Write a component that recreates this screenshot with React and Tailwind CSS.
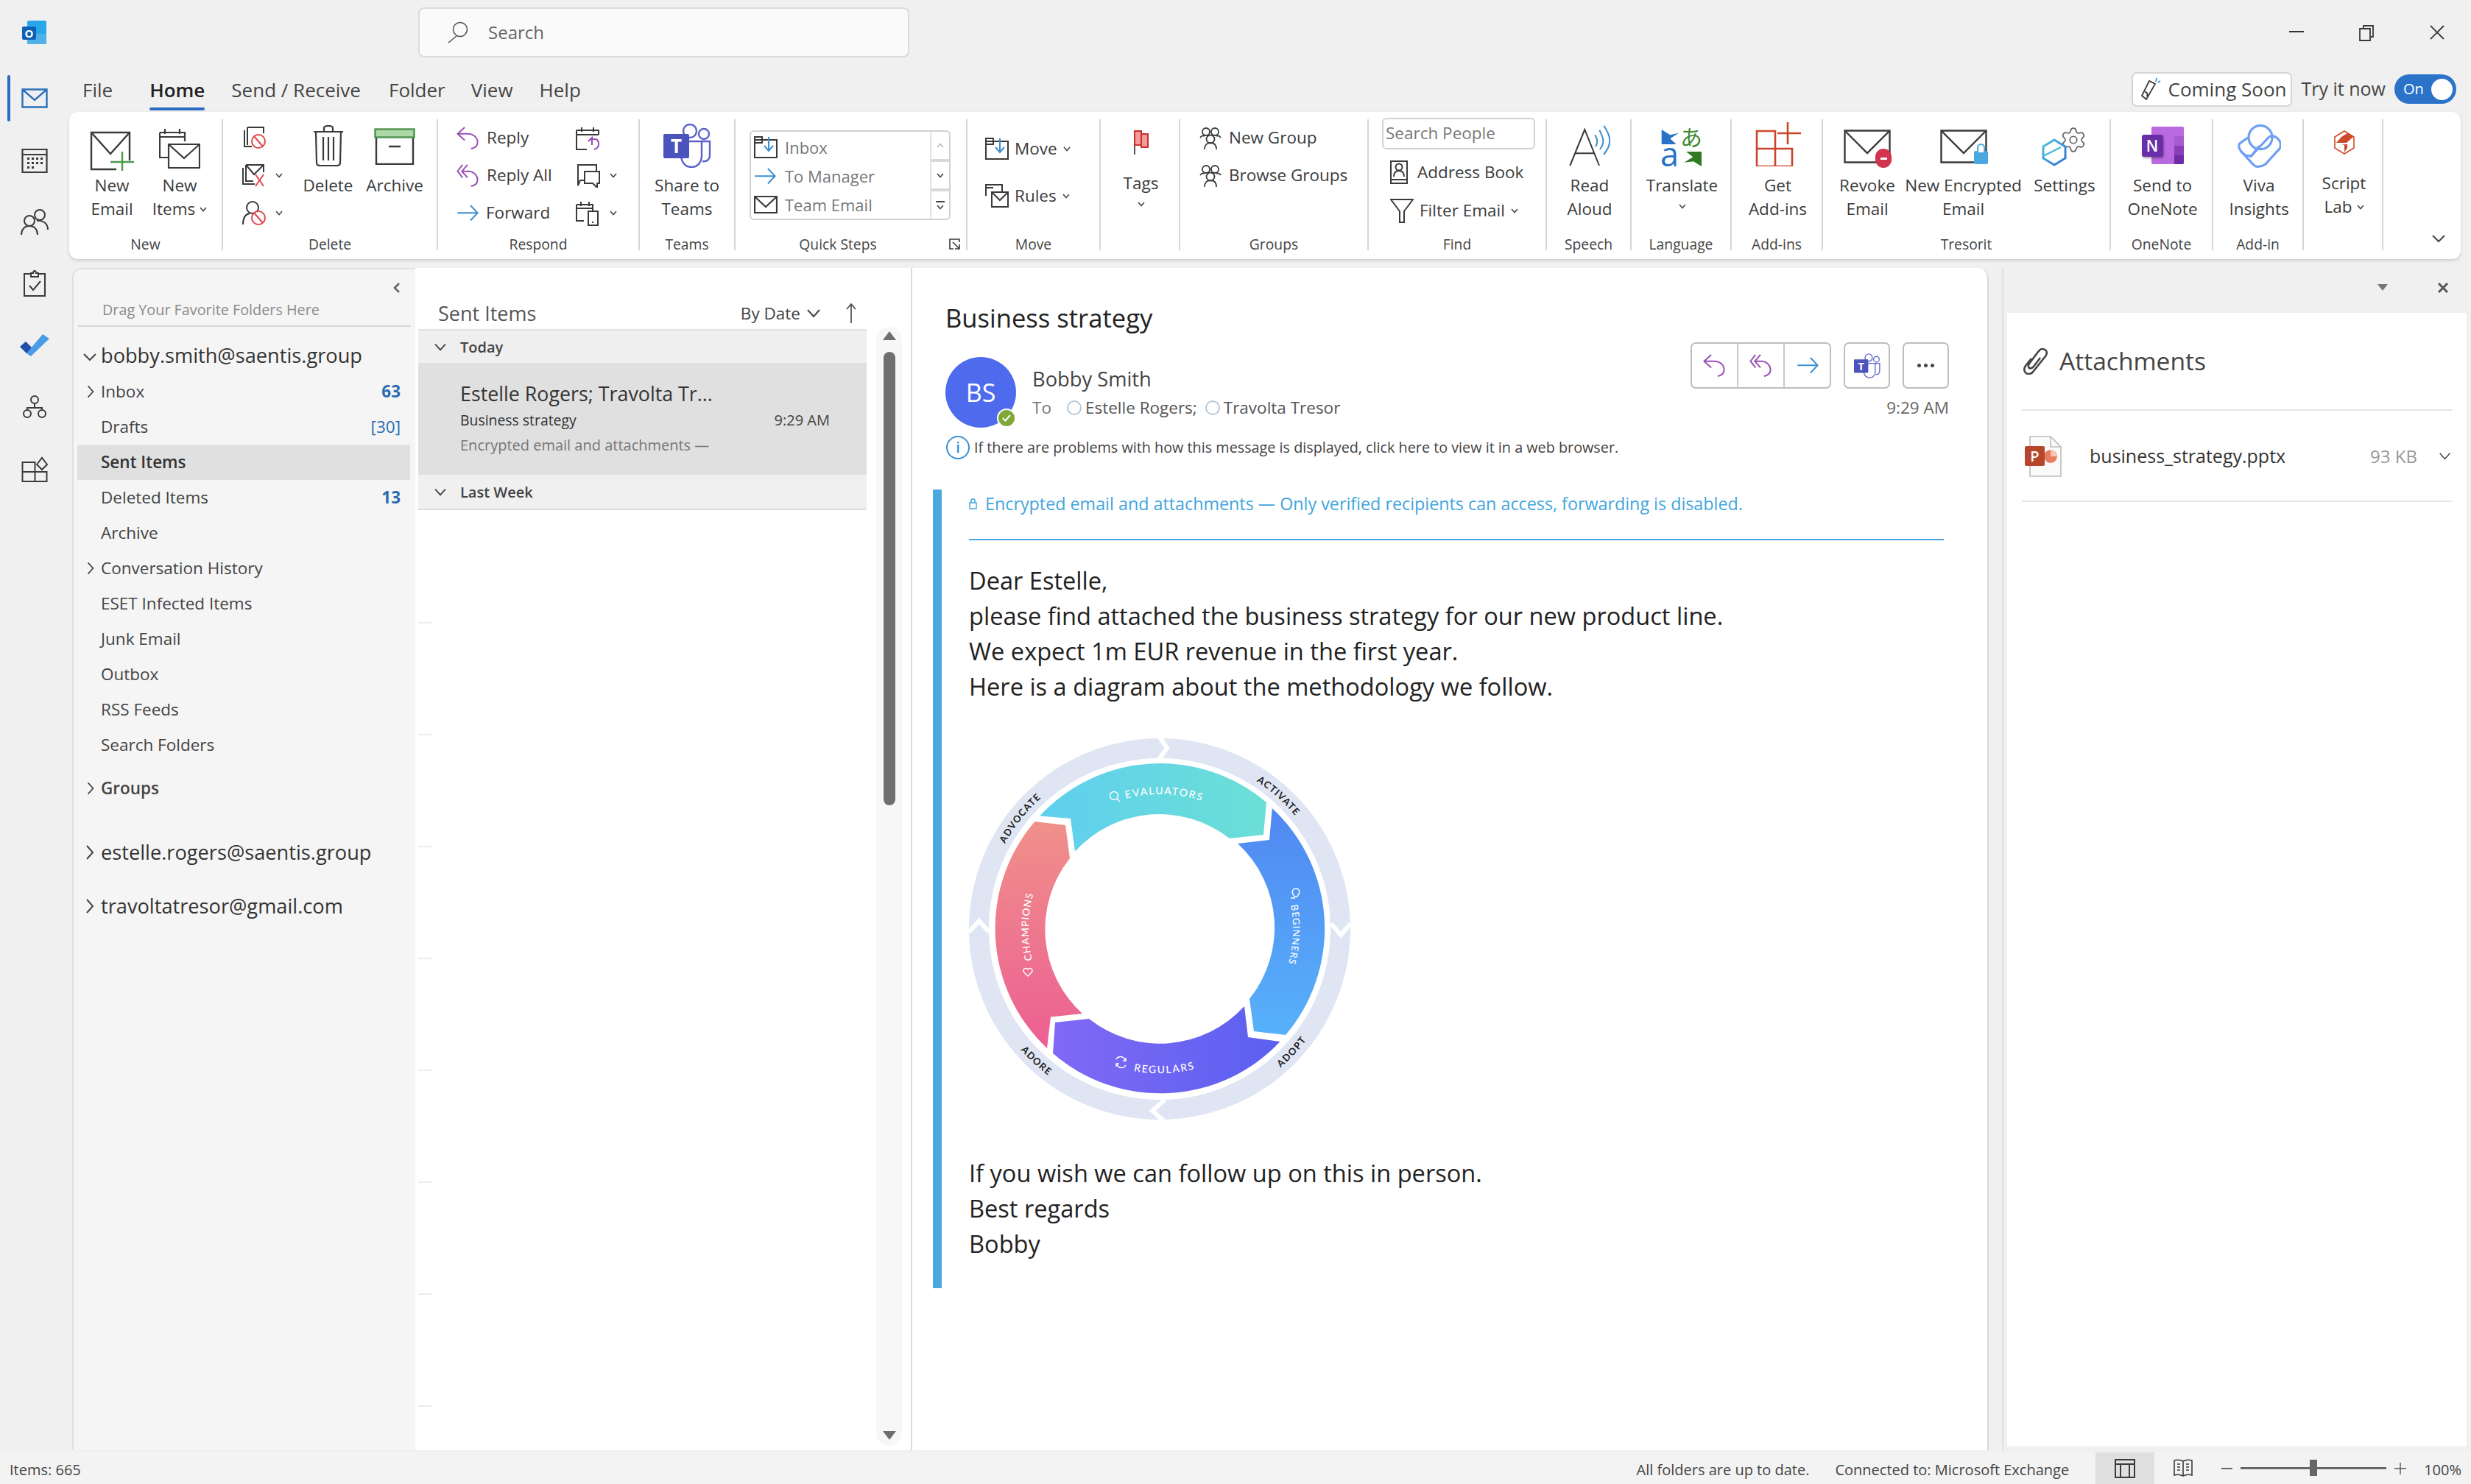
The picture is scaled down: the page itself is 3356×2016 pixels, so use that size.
import React from "react";
import { Settings as Gear } from "lucide-react";

const INK = "#3a3a3a";

const Svg = ({ w, h, vw, vh, className = "", children, stroke = INK, sw = 2 }) => (
  <svg
    width={w}
    height={h}
    viewBox={`0 0 ${vw || w} ${vh || h}`}
    fill="none"
    stroke={stroke}
    strokeWidth={sw}
    className={"shrink-0 " + className}
  >
    {children}
  </svg>
);

const Chev = ({ className = "", w = 10, h = 7, stroke = "#444", sw = 1.6 }) => (
  <Svg w={w} h={h} vw={10} vh={7} stroke={stroke} sw={sw} className={className}>
    <path d="M1 1l4 4.5L9 1" />
  </Svg>
);

const Down = ({ className = "", s = 20 }) => (
  <Svg w={s} h={s} vw={20} vh={20} stroke="#444" sw={2} className={className}>
    <path d="M2 6l8 8 8-8" />
  </Svg>
);

const Right = ({ className = "" }) => (
  <Svg w={12} h={22} stroke="#444" sw={2} className={className}>
    <path d="M2 2l8 9-8 9" />
  </Svg>
);

/* ---- ribbon + reading pane action icons ---- */
const ReplyIco = ({ s = 31, className = "" }) => (
  <Svg w={s} h={s} vw={31} vh={32} stroke="#9a4fb3" className={className}>
    <path d="M11 1L1 10l10 9M1 10h14c9 0 14 6 14 12 0 5-4 8-9 9" />
  </Svg>
);
const ReplyAllIco = ({ s = 31, className = "" }) => (
  <Svg w={s} h={s} vw={31} vh={32} stroke="#9a4fb3" className={className}>
    <path d="M8 1L1 10l7 9M15 1l-8 9 8 9M7 10h9c8 0 13 6 13 12 0 5-4 8-9 9" />
  </Svg>
);
const ForwardIco = ({ s = 30, className = "" }) => (
  <Svg w={s} h={s * 0.75} vw={30} vh={23} stroke="#3b8fd1" className={className}>
    <path d="M1 11.5h27M19 1l10 10.5L19 22" />
  </Svg>
);

const TeamsIco = ({ w = 65, h = 60, className = "" }) => (
  <Svg w={w} h={h} vw={65} vh={60} stroke="#5b64c9" sw={2.4} className={className}>
    <circle cx="36" cy="10" r="9" />
    <circle cx="55" cy="14" r="7" />
    <path d="M34 24h29v18c0 7-4 10-10 9" />
    <path d="M24 46c2 8 7 13 14 13 9 0 14-7 14-16V24" />
    <rect x="0" y="14" width="35" height="33" rx="2" fill="#4b53bc" stroke="none" />
    <text x="17.5" y="40" fill="#fff" stroke="none" fontSize="26" fontWeight="700" textAnchor="middle" fontFamily="Open Sans">T</text>
  </Svg>
);

const Envelope = ({ children, w = 64, h = 46 }) => (
  <Svg w={w} h={h} sw={2.4}>
    <path d={`M1.5 1.5h${w - 3}v${h - 3}h-${w - 3}z`} />
    <path d={`M1.5 1.5L${w / 2} 32l${w / 2 - 1.5}-30.5`} />
    {children}
  </Svg>
);

const Big = ({ className = "", icon, lines, chev, area = "h-[74px]", under }) => (
  <div className={"flex flex-col items-center shrink-0 " + className}>
    <div className={"flex justify-center w-full " + area}>{icon}</div>
    {lines.map((l, i) => (
      <div key={l} className="h-[32px] leading-[32px] whitespace-nowrap flex items-center gap-[6px]">
        {l}
        {chev && i === lines.length - 1 && <Chev />}
      </div>
    ))}
    {under && <Chev className="mt-[9px]" />}
  </div>
);

const Small = ({ icon, text, chev, className = "", gap = "gap-[10px]" }) => (
  <div className={"flex items-center whitespace-nowrap " + gap + " " + className}>
    {icon}
    {text && <span>{text}</span>}
    {chev && <Chev />}
  </div>
);

const Group = ({ className = "", label, children, last }) => (
  <div className={"relative flex flex-col h-[178px] shrink-0 " + (last ? "" : "border-r-2 border-[#d6d6d6] ") + className}>
    <div className="flex-1 flex">{children}</div>
    {label && <div className="h-[16px] leading-[16px] text-center text-[19.3px] text-[#444] whitespace-nowrap">{label}</div>}
  </div>
);

const PeoplePair = ({ className = "" }) => (
  <Svg w={30} h={31} sw={1.8} className={className}>
    <circle cx="9" cy="7" r="5" />
    <circle cx="21" cy="7" r="5" />
    <circle cx="15" cy="17" r="5.5" />
    <path d="M1 15c2-3 4-3 6-2M29 15c-2-3-4-3-6-2M7 31c0-6 3-9 8-9s8 3 8 9" />
  </Svg>
);

const Ribbon = () => (
  <div className="flex h-[200px] w-[3248px] pt-[10px] bg-white rounded-[12px] shadow-[0_2px_4px_rgba(0,0,0,0.15)] text-[22.5px] text-[#3b3b3b] leading-none">
    <Group className="w-[209px]" label="New">
      <div className="flex pl-[10px]">
        <Big
          className="w-[96px]"
          lines={["New", "Email"]}
          icon={
            <Svg w={61} h={54} sw={2.4} className="mt-[16px]">
              <path d="M2 34V2h52v50H2zM2 2l26 29L54 2" />
              <rect x="36" y="40" width="20" height="14" fill="#fff" stroke="none" />
              <path d="M44 28v26M28 42h32" stroke="#4c9a4c" />
            </Svg>
          }
        />
        <Big
          className="w-[88px]"
          lines={["New", "Items"]}
          chev
          icon={
            <Svg w={56} h={58} sw={2.2} className="mt-[10px]">
              <path d="M1 8h34v12M1 8v34h11M1 14h34M8 3v7M28 3v7" />
              <path d="M13 24h42v32H13zM13 24l21 19 21-19" />
            </Svg>
          }
        />
      </div>
    </Group>
    <Group className="w-[292px]" label="Delete">
      <div className="flex flex-col w-[97px] pl-[25px]">
        <Small
          className="h-[51px]"
          icon={
            <Svg w={34} h={31} sw={2}>
              <path d="M8 1h22v8M4 5v22h10M8 1v24" />
              <circle cx="23" cy="20" r="9" stroke="#e0474c" fill="#fff" />
              <path d="M17 13l12 14" stroke="#e0474c" />
            </Svg>
          }
        />
        <Small
          className="h-[51px]"
          gap="gap-[12px]"
          chev
          icon={
            <Svg w={34} h={31} sw={2}>
              <path d="M6 1h24v10M2 5v22h16M6 1v22h10M6 1l11 13L30 1" />
              <path d="M19 14l11 16M30 14L19 30" stroke="#e0474c" />
            </Svg>
          }
        />
        <Small
          className="h-[51px]"
          gap="gap-[12px]"
          chev
          icon={
            <Svg w={34} h={33} sw={2}>
              <circle cx="15" cy="9" r="8" />
              <path d="M2 32c0-9 3-14 9-15" />
              <circle cx="23" cy="23" r="9" stroke="#e0474c" fill="#fff" />
              <path d="M17 16l12 14" stroke="#e0474c" />
            </Svg>
          }
        />
      </div>
      <Big
        className="w-[91px]"
        lines={["Delete"]}
        icon={
          <Svg w={42} h={56} sw={2.2} className="mt-[8px]">
            <path d="M1 9h40M4 9l1 42c0 3 2 4 5 4h22c3 0 5-1 5-4l1-42M15 9V4c0-2 2-3 6-3s6 1 6 3v5M14 16v32M21 16v32M28 16v32" />
          </Svg>
        }
      />
      <Big
        className="w-[90px]"
        lines={["Archive"]}
        icon={
          <Svg w={56} h={50} sw={2.4} className="mt-[12px]">
            <path d="M3 12v37h50V12M20 25h16" />
            <rect x="1.5" y="1.5" width="53" height="11" fill="#add9a8" stroke="#4c924c" />
          </Svg>
        }
      />
    </Group>
    <Group className="w-[274px]" label="Respond">
      <div className="flex flex-col w-[187px] pl-[25px]">
        <Small className="h-[51px]" icon={<ReplyIco />} text="Reply" />
        <Small className="h-[51px]" icon={<ReplyAllIco />} text="Reply All" />
        <Small className="h-[51px]" icon={<ForwardIco />} text="Forward" />
      </div>
      <div className="flex flex-col">
        <Small
          className="h-[51px]"
          icon={
            <Svg w={32} h={33} sw={2}>
              <path d="M1 6h30v6M1 6v26h14M1 12h30M8 2v6M24 2v6" />
              <path d="M17 21l5-5 0 10M20 18h6c4 0 5 4 5 7 0 4-2 6-6 7" stroke="#9a4fb3" />
            </Svg>
          }
        />
        <Small
          className="h-[51px]"
          gap="gap-[12px]"
          chev
          icon={
            <Svg w={34} h={33} sw={2}>
              <path d="M2 2h26v9H12v12H6l-3 7V2M12 11h20v16h-3v6l-6-6H12z" />
            </Svg>
          }
        />
        <Small
          className="h-[51px]"
          gap="gap-[12px]"
          chev
          icon={
            <Svg w={34} h={34} sw={2}>
              <path d="M1 5h22v8M1 5v22h10M1 10h22M7 1v6M18 1v6" />
              <rect x="17" y="14" width="13" height="19" />
              <path d="M23 28v2" />
            </Svg>
          }
        />
      </div>
    </Group>
    <Group className="w-[130px]" label="Teams">
      <Big
        className="w-[128px]"
        lines={["Share to", "Teams"]}
        icon={<TeamsIco className="mt-[6px]" />}
      />
    </Group>
    <Group className="w-[315px]" label={<span className="block pr-[35px]">Quick Steps</span>}>
      <div className="flex ml-[19px] mt-[15px] w-[273px] h-[122px] border-2 border-[#d2d2d2] rounded-[6px] text-[#777] text-[22px]">
        <div className="flex-1 flex flex-col pl-[4px] pt-[2px]">
          <Small
            className="h-[40px]"
            gap="gap-[10px]"
            icon={
              <Svg w={32} h={30} sw={2}>
                <path d="M1 5h30v24H1zM1 5V1h10v8H1" />
                <path d="M20 1v18M14 13l6 7 6-7" stroke="#3b8fd1" />
              </Svg>
            }
            text="Inbox"
          />
          <Small className="h-[40px]" gap="gap-[12px]" icon={<ForwardIco s={30} />} text="To Manager" />
          <Small
            className="h-[40px]"
            gap="gap-[10px]"
            icon={
              <Svg w={32} h={24} sw={2.2}>
                <path d="M1 1h30v22H1zM1 1l15 14L31 1" />
              </Svg>
            }
            text="Team Email"
          />
        </div>
        <div className="w-[26px] flex flex-col border-l-2 border-[#e2e2e2]">
          <div className="flex-1 flex items-center justify-center border-b-4 border-[#d8d8d8]">
            <Chev stroke="#bbb" className="rotate-180" />
          </div>
          <div className="flex-1 flex items-center justify-center border-b-4 border-[#d8d8d8]">
            <Chev />
          </div>
          <div className="flex-1 flex flex-col gap-[3px] items-center justify-center">
            <div className="w-[12px] h-[2px] bg-[#444]" />
            <Chev />
          </div>
        </div>
      </div>
      <Svg w={15} h={15} sw={1.6} className="absolute right-[8px] bottom-[1px]">
        <path d="M14 5V1H1v13h5M5 5l9 9M14 8v6H8" />
      </Svg>
    </Group>
    <Group className="w-[181px]" label="Move">
      <div className="flex flex-col pl-[24px] mt-[8px] -mb-[10px]">
        <Small
          className="h-[64px]"
          gap="gap-[8px]"
          icon={
            <Svg w={32} h={30} sw={2}>
              <path d="M1 5h30v24H1zM1 5V1h10v8H1" />
              <path d="M20 1v18M14 13l6 7 6-7" stroke="#3b8fd1" />
            </Svg>
          }
          text="Move"
          chev
        />
        <Small
          className="h-[64px]"
          gap="gap-[8px]"
          icon={
            <Svg w={32} h={32} sw={2}>
              <path d="M1 16V1h22v10M1 5h10" />
              <path d="M9 11h22v20H9zM9 11l11 11 11-11" />
            </Svg>
          }
          text="Rules"
          chev
        />
      </div>
    </Group>
    <Group className="w-[108px]">
      <Big
        className="w-[106px] pl-[3px]"
        area="h-[71px]"
        lines={["Tags"]}
        under
        icon={
          <Svg w={22} h={33} sw={2} className="mt-[15px]">
            <path d="M2 0v33" stroke="#555" />
            <path d="M2 1h9v19H2z" fill="#f19b9b" stroke="#c9302c" />
            <path d="M11 5h9v18h-9z" fill="#f19b9b" stroke="#c9302c" />
          </Svg>
        }
      />
    </Group>
    <Group className="w-[256px]" label="Groups">
      <div className="flex flex-col pl-[26px]">
        <Small className="h-[51px]" icon={<PeoplePair />} text="New Group" />
        <Small className="h-[51px]" icon={<PeoplePair />} text="Browse Groups" />
      </div>
    </Group>
    <Group className="w-[242px]" label="Find">
      <div className="flex flex-col pl-[18px] -mt-[2px]">
        <div className="w-[208px] h-[43px] border-2 border-[#d2d2d2] rounded-[6px] px-[3px] flex items-center text-[#777] whitespace-nowrap">Search People</div>
        <div className="flex flex-col mt-[5px] pl-[11px]">
          <Small
            className="h-[52px]"
            gap="gap-[13px]"
            icon={
              <Svg w={24} h={32} sw={2}>
                <path d="M1 1h22v30H1zM1 26h22" />
                <circle cx="12" cy="9" r="4.5" />
                <path d="M5 22c0-6 3-8 7-8s7 2 7 8" />
              </Svg>
            }
            text="Address Book"
          />
          <Small
            className="h-[52px]"
            gap="gap-[8px]"
            icon={
              <Svg w={32} h={33} sw={2}>
                <path d="M1 1h30L19 17v15h-6V17z" />
              </Svg>
            }
            text="Filter Email"
            chev
          />
        </div>
      </div>
    </Group>
    <Group className="w-[115px]" label="Speech">
      <Big
        className="w-[113px] pl-[3px]"
        lines={["Read", "Aloud"]}
        icon={
          <Svg w={56} h={60} className="mt-[6px]" stroke="#3b8fd1" sw={2}>
            <path d="M1.3 57L21.3 8 41 57M8 40.3h26" stroke="#3a3a3a" sw={2.8} />
            <path d="M35.3 15.3c3.7 6.7 3.7 10.7 1 16M41.3 8.7c6.7 13.3 6.7 17.3.7 26.3M47.3 2.7c10.7 16 10.7 26-.3 39.3" />
          </Svg>
        }
      />
    </Group>
    <Group className="w-[136px]" label="Language">
      <Big
        className="w-[134px] pl-[3px]"
        lines={["Translate"]}
        under
        icon={
          <Svg w={58} h={62} stroke="none" className="mt-[6px] overflow-visible">
            <path d="M.7 8l11.6 7.3L24 12.7l-11.7 7.6L20.7 28H.7z" fill="#2a72c3" />
            <text x="26" y="30" fontSize="30" fill="#3f8a2e" fontFamily="Noto Sans CJK JP">あ</text>
            <text x="-1" y="58" fontSize="45" fill="#2a72c3" fontFamily="Open Sans">a</text>
            <path d="M55 38v20l-11-6.7-12.7 1.4L43.3 45.3 34 38z" fill="#2f7a22" />
          </Svg>
        }
      />
    </Group>
    <Group className="w-[124px]" label="Add-ins">
      <Big
        className="w-[122px] pl-[3px]"
        lines={["Get", "Add-ins"]}
        icon={
          <Svg w={62} h={60} stroke="#c9452a" sw={2.6} className="mt-[4px]">
            <path d="M2 12h25v48H2zM2 36h48v24H27M27 36V12" />
            <path d="M44 0v30M30 15h32" />
          </Svg>
        }
      />
    </Group>
    <Group className="w-[391px]" label="Tresorit">
      <div className="flex pl-[2px]">
        <Big
          className="w-[116px]"
          lines={["Revoke", "Email"]}
          icon={
            <div className="mt-[14px] relative w-[64px] h-[46px]">
              <Envelope />
              <div className="absolute -right-[1px] -bottom-[6px] w-[22px] h-[26px] rounded-full bg-[#d0344f] flex items-center justify-center">
                <div className="w-[9px] h-[3px] bg-white" />
              </div>
            </div>
          }
        />
        <Big
          className="w-[145px]"
          lines={["New Encrypted", "Email"]}
          icon={
            <div className="mt-[14px] relative w-[64px] h-[46px]">
              <Envelope />
              <div className="absolute -right-[1px] -bottom-[1px] w-[19px] h-[18px] bg-[#4aa8e0] rounded-[2px]" />
              <div className="absolute right-[3px] bottom-[15px] w-[11px] h-[12px] border-2 border-[#4aa8e0] rounded-t-full border-b-0 bg-white" />
            </div>
          }
        />
        <Big
          className="w-[130px]"
          lines={["Settings"]}
          icon={
            <div className="mt-[10px] relative w-[62px] h-[54px]">
              <Gear size={38} strokeWidth={1.1} color="#666" className="absolute right-0 -top-[1px]" />
              <svg width="34" height="38" viewBox="0 0 34 38" fill="none" className="absolute left-0 bottom-0">
                <defs>
                  <linearGradient id="gHex" x1="0" y1="0" x2="1" y2="1">
                    <stop offset="0" stopColor="#4fc3dc" />
                    <stop offset="1" stopColor="#2f6fd8" />
                  </linearGradient>
                </defs>
                <path d="M17 2l15 9v16l-15 9-15-9V11z" stroke="url(#gHex)" strokeWidth="3" />
                <path d="M2 24l24-12" stroke="#45b8e0" strokeWidth="2.4" />
              </svg>
            </div>
          }
        />
      </div>
    </Group>
    <Group className="w-[139px]" label="OneNote">
      <Big
        className="w-[137px] pl-[3px]"
        lines={["Send to", "OneNote"]}
        icon={
          <div className="mt-[10px] relative w-[57px] h-[51px] shrink-0">
            <div className="absolute left-[13px] top-0 w-[44px] h-[51px] bg-[#ba6ae0] rounded-[2px] overflow-hidden">
              <div className="absolute right-0 top-[13px] w-[13px] h-[13px] bg-[#a55cd0]" />
              <div className="absolute right-0 top-[26px] w-[13px] h-[13px] bg-[#8a3fb8]" />
              <div className="absolute right-0 top-[39px] w-[13px] h-[12px] bg-[#6f2aa8]" />
            </div>
            <div className="absolute left-0 top-[11px] w-[29px] h-[30px] bg-[#6a2fa8] rounded-[3px] shadow-[1px_2px_3px_rgba(0,0,0,0.3)] flex items-center justify-center text-white text-[21px] font-semibold">N</div>
          </div>
        }
      />
    </Group>
    <Group className="w-[123px]" label="Add-in">
      <Big
        className="w-[121px] pl-[3px]"
        lines={["Viva", "Insights"]}
        icon={
          <Svg w={59} h={60} stroke="#6f9ff5" sw={3.2} className="mt-[7px]">
            <circle cx="31" cy="17.7" r="16" />
            <path d="M14.3 17.7L2.7 26C1 29 2 33 4.3 36L21 54.3c2.6 3 6 3.5 8.3 2.7 3 0 6-1 8.4-2.7L54.3 36c4-3.5 4-7 4-7 0-3.6 0-6.3-4-9.7-3.3-3.8-8-4-11.6-2.3L17 44.3" />
            <path d="M4.3 36c5 6.7 8.4 6.7 13.4 6.7 2.3 0 5-5 5-5l6.6-8.4" />
          </Svg>
        }
      />
    </Group>
    <Group className="w-[108px]">
      <Big
        className="w-[106px] pl-[3px]"
        area="h-[71px]"
        lines={["Script", "Lab"]}
        chev
        icon={
          <Svg w={28} h={33} stroke="#cf4a2a" sw={1.6} className="mt-[15px]">
            <path d="M14 1l13 8v15l-13 8-13-8V9z" />
            <path d="M10 9l8-5 8 5-9 8H3zM10 19h8v5l-4 6v-10z" fill="#cf4a2a" stroke="none" />
          </Svg>
        }
      />
    </Group>
    <div className="flex-1 flex items-end pl-[65px] pb-[18px]">
      <Down s={20} />
    </div>
  </div>
);

/* ---- left rail ---- */
const Rail = () => (
  <div className="w-[94px] shrink-0 flex flex-col items-center pt-[1px] relative">
    <div className="absolute left-[10px] top-[12px] w-[4px] h-[63px] rounded-full bg-[#2b6cc0]" />
    {[
      <Svg key="m" w={36} h={27} stroke="#2b70b8" sw={2.4}>
        <path d="M1.5 1.5h33v24h-33zM1.5 1.5L18 16 34.5 1.5" />
      </Svg>,
      <Svg key="c" w={36} h={36} sw={2.2}>
        <path d="M1.5 4h33v31h-33zM1.5 11h33" />
        <path d="M8 15h3v3H8zM14 15h3v3h-3zM20 15h3v3h-3zM26 15h3v3h-3zM8 21h3v3H8zM14 21h3v3h-3zM20 21h3v3h-3zM26 21h3v3h-3zM8 27h3v3H8zM14 27h3v3h-3z" fill={INK} stroke="none" />
      </Svg>,
      <Svg key="p" w={38} h={36} sw={2}>
        <circle cx="26" cy="9" r="7" />
        <circle cx="12" cy="17" r="7" />
        <path d="M1 36c0-7 4-12 11-12s11 5 11 12M22 17c8-1 15 3 15 12" />
      </Svg>,
      <Svg key="t" w={30} h={36} sw={2}>
        <path d="M10 5H1v30h28V5h-9M10 9V4h3c0-4 4-4 4 0h3v5zM8 21l5 6 10-12" />
      </Svg>,
      <Svg key="d" w={40} h={32} stroke="none">
        <path d="M0 18l8-7 9 9-8 7z" fill="#1f4fa8" />
        <path d="M9 27L31 1l9 6-25 24z" fill="#4a9be8" />
      </Svg>,
      <Svg key="o" w={32} h={32} sw={2}>
        <circle cx="16" cy="6" r="5" />
        <circle cx="6" cy="25" r="5" />
        <circle cx="26" cy="25" r="5" />
        <path d="M16 11v6M6 20v-3h20v3" />
      </Svg>,
      <Svg key="a" w={36} h={36} sw={2}>
        <path d="M1.5 9h17v26h-17zM1.5 22h33v13h-16M18.5 9v13M21 12l7-9 7 9-7 7z" />
      </Svg>,
    ].map((ic, i) => (
      <div key={i} className="h-[84px] flex items-center justify-center w-full">
        {ic}
      </div>
    ))}
  </div>
);

/* ---- folder pane ---- */
const Folder = ({ name, chevron, count, bold, active, className = "" }) => (
  <div className={"relative h-[48px] ml-[5px] mr-[7px] flex items-center pl-[32px] pr-[13px] text-[22.5px] " + (active ? "bg-[#e0e0e0] font-semibold text-[#333] " : "text-[#444] ") + (bold ? "font-semibold " : "") + className}>
    {chevron && <Right className="absolute left-[12px] scale-[0.85]" />}
    <span className="flex-1">{name}</span>
    {count && <span className={"text-[#2b6cb0] " + (count.startsWith("[") ? "" : "font-bold")}>{count}</span>}
  </div>
);

const Account = ({ name, open, className = "" }) => (
  <div className={"relative h-[50px] flex items-center pl-[37px] text-[27.2px] text-[#333] whitespace-nowrap " + className}>
    {open ? <Down s={20} className="absolute left-[12px] top-[17px]" /> : <Right className="absolute left-[16px]" />}
    {name}
  </div>
);

const FolderPane = () => (
  <div className="w-[466px] ml-[4px] shrink-0 bg-[#f5f5f5] rounded-tl-[12px] border-l-2 border-t-2 border-[#e0e0e0]">
    <div className="relative h-[78px] mx-[6px] border-b-2 border-[#d8d8d8] flex items-end pb-[6px] pl-[33px] text-[19.8px] text-[#8a8a8a] whitespace-nowrap">
      <Svg w={10} h={14} stroke="#666" sw={2.6} className="absolute right-[14px] top-[18px]">
        <path d="M8 1L2 7l6 6" />
      </Svg>
      Drag Your Favorite Folders Here
    </div>
    <Account name="bobby.smith@saentis.group" open className="mt-[14px]" />
    <Folder name="Inbox" chevron count="63" />
    <Folder name="Drafts" count="[30]" />
    <Folder name="Sent Items" active />
    <Folder name="Deleted Items" count="13" />
    <Folder name="Archive" />
    <Folder name="Conversation History" chevron />
    <Folder name="ESET Infected Items" />
    <Folder name="Junk Email" />
    <Folder name="Outbox" />
    <Folder name="RSS Feeds" />
    <Folder name="Search Folders" />
    <Folder name="Groups" chevron bold className="mt-[11px]" />
    <Account name="estelle.rogers@saentis.group" className="mt-[38px]" />
    <Account name="travoltatresor@gmail.com" className="mt-[23px]" />
  </div>
);

/* ---- message list ---- */
const MessageList = () => (
  <div className="relative w-[673px] shrink-0 bg-white flex pl-[4px]">
    <div className="w-[609px] shrink-0 flex flex-col">
      <div className="h-[83px] flex items-end pb-[3px] pl-[27px] pr-[13px] text-[#555]">
        <span className="text-[27px] leading-[36px]">Sent Items</span>
        <span className="ml-auto flex items-center gap-[8px] text-[22.5px] leading-[36px] text-[#444]">
          By Date
          <Chev w={20} h={14} sw={1} />
        </span>
        <Svg w={16} h={28} stroke="#444" sw={1.6} className="ml-[33px] mb-[5px]">
          <path d="M8 28V2M2 9l6-7 6 7" />
        </Svg>
      </div>
      <div className="h-[46px] pt-[1px] bg-[#efefef] border-t-2 border-[#e2e2e2] flex items-center pl-[21px] text-[20px] font-semibold text-[#444]">
        <Chev w={18} h={12} sw={1.1} />
        <span className="ml-[18px]">Today</span>
      </div>
      <div className="h-[152px] bg-[#e0e0e0] pt-[25px] pl-[57px] pr-[50px]">
        <div className="h-[34px] leading-[34px] text-[26.8px] text-[#333] whitespace-nowrap">Estelle Rogers; Travolta Tr...</div>
        <div className="h-[37px] leading-[37px] text-[19.4px] text-[#333] flex justify-between">
          <span>Business strategy</span>
          <span className="text-[20px] text-[#444]">9:29 AM</span>
        </div>
        <div className="h-[32px] leading-[32px] text-[20px] text-[#777] whitespace-nowrap">Encrypted email and attachments —</div>
      </div>
      <div className="h-[48px] pt-[2px] bg-[#f0f0f0] border-b-2 border-[#dcdcdc] flex items-center pl-[21px] text-[20px] font-semibold text-[#444]">
        <Chev w={18} h={12} sw={1.1} />
        <span className="ml-[18px]">Last Week</span>
      </div>
    </div>
    <div className="relative ml-[13px] mt-[80px] mb-[6px] w-[35px] bg-[#f7f7f7] rounded-full flex flex-col items-center">
      <div className="w-0 h-0 mt-[6px] border-l-[9px] border-r-[9px] border-b-[12px] border-l-transparent border-r-transparent border-b-[#6e6e6e]" />
      <div className="w-[16px] h-[616px] mt-[16px] bg-[#6f6f6f] rounded-full" />
      <div className="w-0 h-0 mt-auto mb-[8px] border-l-[9px] border-r-[9px] border-t-[12px] border-l-transparent border-r-transparent border-t-[#6e6e6e]" />
    </div>
    {[481, 633, 785, 937, 1089, 1241, 1393, 1545].map((y) => (
      <div key={y} className="absolute left-[4px] w-[18px] h-[2px] bg-[#ececec]" style={{ top: y }} />
    ))}
  </div>
);

/* ---- funnel diagram ---- */
const pt = (r, a) => {
  const t = (a * Math.PI) / 180;
  return [(259 + r * Math.sin(t)).toFixed(1), (259 - r * Math.cos(t)).toFixed(1)];
};
const arc = (r, a, cw) => {
  const from = pt(r, cw ? a - 60 : a + 60);
  const to = pt(r, cw ? a + 60 : a - 60);
  return `M${from[0]} ${from[1]}A${r} ${r} 0 0 ${cw ? 1 : 0} ${to[0]} ${to[1]}`;
};
const RingLabel = ({ id, r, a, cw = true, fill, size, spacing, weight = 500, children }) => (
  <>
    <path id={id} d={arc(r, a, cw)} fill="none" stroke="none" />
    <text fill={fill} fontSize={size} letterSpacing={spacing} fontWeight={weight} fontFamily="Lato" textAnchor="middle">
      <textPath href={`#${id}`} startOffset="50%">
        {children}
      </textPath>
    </text>
  </>
);

const Diagram = () => (
  <svg width="520" height="520" viewBox="0 0 520 520" fill="none" className="block">
    <defs>
      <linearGradient id="gTeal" x1="0" x2="1" y1="0" y2="0">
        <stop offset="0" stopColor="#5fcfee" />
        <stop offset="1" stopColor="#6bdfd6" />
      </linearGradient>
      <linearGradient id="gBlue" x1="0" x2="0" y1="0" y2="1">
        <stop offset="0" stopColor="#5088f2" />
        <stop offset="1" stopColor="#57b1fa" />
      </linearGradient>
      <linearGradient id="gPurple" x1="0" x2="1" y1="0" y2="0">
        <stop offset="0" stopColor="#8069f5" />
        <stop offset="1" stopColor="#5b60f0" />
      </linearGradient>
      <linearGradient id="gPink" x1="0" x2="0" y1="0" y2="1">
        <stop offset="0" stopColor="#f0908a" />
        <stop offset="1" stopColor="#ec5f93" />
      </linearGradient>
    </defs>
    <circle cx="259" cy="259" r="245.5" stroke="#dfe5f3" strokeWidth="27" />
    <g stroke="#fff" strokeWidth="6">
      <path d="M258.7 -2L269 13 258.7 28" />
      <path d="M492 252l13 15 13-15" />
      <path d="M266 491l-17 15 17 15" />
      <path d="M0 263l14-15 13 15" />
    </g>
    <path d="M96 105.5A223 223 0 0 1 404 87L400 131 354 136A155 155 0 0 0 144 153.6L138 109z" fill="url(#gTeal)" />
    <path d="M411.8 95A223 223 0 0 1 430 403L387 398 381 354A155 155 0 0 0 365 143L408 138z" fill="url(#gBlue)" />
    <path d="M422.5 412A223 223 0 0 1 114 428L117 386 163 381A155 155 0 0 0 374 364L379 406z" fill="url(#gPurple)" />
    <path d="M106 421A223 223 0 0 1 89.5 113L131 118 137 163A155 155 0 0 0 154 374L111 378.5z" fill="url(#gPink)" />
    <RingLabel id="lEval" r={183} a={2} fill="#fff" size={14} spacing={1.8}>EVALUATORS</RingLabel>
    <RingLabel id="lBeg" r={181} a={92.5} fill="#fff" size={13} spacing={1}>BEGINNERS</RingLabel>
    <RingLabel id="lReg" r={196} a={178} cw={false} fill="#fff" size={14} spacing={1.8}>REGULARS</RingLabel>
    <RingLabel id="lCha" r={178} a={-89} fill="#fff" size={13.5} spacing={1.1}>CHAMPIONS</RingLabel>
    <RingLabel id="lAct" r={240} a={41.8} fill="#1c1c1c" size={13} spacing={1.4} weight={700}>ACTIVATE</RingLabel>
    <RingLabel id="lAdv" r={240} a={-51.5} fill="#1c1c1c" size={13} spacing={1.4} weight={700}>ADVOCATE</RingLabel>
    <RingLabel id="lAdp" r={250} a={132.9} cw={false} fill="#1c1c1c" size={13} spacing={1.4} weight={700}>ADOPT</RingLabel>
    <RingLabel id="lAdr" r={250} a={-137} cw={false} fill="#1c1c1c" size={13} spacing={1.4} weight={700}>ADORE</RingLabel>
    <g stroke="#fff" strokeWidth="1.4">
      <circle cx="197" cy="78" r="5.5" />
      <path d="M201 82l4 4" />
      <path d="M441 213c-3-3-2-9 3-9s6 6 3 9l-1 2h-4zM437 217h6" />
      <path d="M80 323l-5-5c-3-4 2-8 5-4 3-4 8 0 5 4z" />
      <path d="M200 436c2-4 8-5 11-1l2 3M213 444c-2 4-8 5-11 1l-2-3M213 434v4h-4M200 446v-4h4" />
    </g>
  </svg>
);

/* ---- reading pane ---- */
const Outlined = ({ children, className = "" }) => (
  <div className={"h-[63px] border-2 border-[#bdbdbd] rounded-[7px] flex items-center justify-center " + className}>{children}</div>
);

const ReadingPane = () => (
  <div className="w-[1464px] shrink-0 bg-white rounded-tr-[14px] border-l-2 border-r-2 border-[#d9d9d9] pl-[45px] pr-[52px]">
    <div className="pt-[44px] h-[92px] text-[34.6px] leading-[48px] text-[#222] whitespace-nowrap">Business strategy</div>
    <div className="flex mt-[9px] h-[116px]">
      <div className="relative mt-[20px] w-[96px] h-[96px] rounded-full bg-[#4f6bed] flex items-center justify-center text-white text-[34px] shrink-0">
        BS
        <div className="absolute right-0 bottom-0 w-[26px] h-[26px] rounded-full bg-[#7fa838] border-2 border-white flex items-center justify-center">
          <Svg w={12} h={10} stroke="#fff" sw={2}>
            <path d="M1 5l3.5 3.5L11 1" />
          </Svg>
        </div>
      </div>
      <div className="ml-[22px] pt-[32px]">
        <div className="h-[36px] leading-[36px] text-[27.3px] text-[#444] whitespace-nowrap">Bobby Smith</div>
        <div className="mt-[3px] h-[36px] flex items-center text-[22.5px] text-[#555] whitespace-nowrap">
          <span className="text-[#777]">To</span>
          <div className="ml-[21px] w-[20px] h-[20px] rounded-full border-2 border-[#b5c8d6]" />
          <span className="ml-[5px]">Estelle Rogers;</span>
          <div className="ml-[11px] w-[20px] h-[20px] rounded-full border-2 border-[#b5c8d6]" />
          <span className="ml-[5px]">Travolta Tresor</span>
        </div>
      </div>
      <div className="ml-auto flex flex-col items-end">
        <div className="flex gap-[17px]">
          <Outlined className="w-[191px]">
            <div className="flex-1 flex items-center justify-center h-full">
              <ReplyIco s={31} />
            </div>
            <div className="flex-1 flex items-center justify-center h-full border-x-2 border-[#c8c8c8]">
              <ReplyAllIco s={31} />
            </div>
            <div className="flex-1 flex items-center justify-center h-full">
              <ForwardIco s={30} />
            </div>
          </Outlined>
          <Outlined className="w-[63px]">
            <TeamsIco w={36} h={34} />
          </Outlined>
          <Outlined className="w-[63px] gap-[4px]">
            <div className="w-[5px] h-[5px] rounded-full bg-[#444]" />
            <div className="w-[5px] h-[5px] rounded-full bg-[#444]" />
            <div className="w-[5px] h-[5px] rounded-full bg-[#444]" />
          </Outlined>
        </div>
        <div className="mt-[8px] h-[36px] leading-[36px] text-[22.5px] text-[#666]">9:29 AM</div>
      </div>
    </div>
    <div className="flex items-center mt-[11px] h-[32px]">
      <div className="ml-[1px] w-[32px] h-[32px] rounded-full border-2 border-[#3b8fd1] text-[#3b8fd1] flex items-center justify-center text-[20px] font-semibold leading-none shrink-0">i</div>
      <span className="ml-[6px] text-[19.8px] text-[#444] whitespace-nowrap">If there are problems with how this message is displayed, click here to view it in a web browser.</span>
    </div>
    <div className="mt-[41px] -ml-[17px] border-l-[12px] border-[#4aa8e0] pl-[37px] pb-[36px]">
      <div className="h-[38px] flex items-center text-[23.3px] text-[#41a5dd] whitespace-nowrap">
        <Svg w={11} h={16} stroke="#41a5dd" sw={1.4} className="mr-[11px]">
          <path d="M1 7h9v8H1zM3 7V4c0-3 5-3 5 0v3" />
        </Svg>
        Encrypted email and attachments — Only verified recipients can access, forwarding is disabled.
      </div>
      <div className="mt-[29px] w-[1324px] h-[2px] bg-[#4aa8e0]" />
      <div className="mt-[31px] text-[32.6px] leading-[48px] text-[#222]">
        <div>Dear Estelle,</div>
        <div>please find attached the business strategy for our new product line.</div>
        <div>We expect 1m EUR revenue in the first year.</div>
        <div>Here is a diagram about the methodology we follow.</div>
      </div>
      <div className="mt-[46px]">
        <Diagram />
      </div>
      <div className="mt-[47px] text-[32.6px] leading-[48px] text-[#222]">
        <div>If you wish we can follow up on this in person.</div>
        <div>Best regards</div>
        <div>Bobby</div>
      </div>
    </div>
  </div>
);

/* ---- attachments pane ---- */
const AttachmentsPane = () => (
  <div className="ml-[18px] flex-1 border-l-2 border-[#e0e0e0] flex flex-col">
    <div className="h-[61px] shrink-0 relative bg-[#f0f0f0]">
      <div className="absolute right-[113px] top-[22px] w-0 h-0 border-l-[7px] border-r-[7px] border-t-[9px] border-l-transparent border-r-transparent border-t-[#777]" />
      <Svg w={14} h={14} stroke="#555" sw={3} className="absolute right-[31px] top-[20px]">
        <path d="M1 1l12 12M13 1L1 13" />
      </Svg>
    </div>
    <div className="flex-1 ml-[5px] mr-[6px] mb-[5px] bg-white px-[20px]">
      <div className="h-[133px] flex items-center border-b-2 border-[#e4e4e4]">
        <Svg w={34} h={36} stroke="#444" sw={2.6} className="ml-[1px]">
          <path d="M12 14L4 24c-4 6 0 11 4 11 3 0 5-1 7-4L31 11c3-4 2-8-1-9-3-2-6-1-9 3L9 21c-2 3-1 5 0 6 2 1 4 0 6-2l9-12" />
        </Svg>
        <span className="ml-[16px] text-[33.6px] text-[#444] leading-none">Attachments</span>
      </div>
      <div className="h-[124px] pt-[2px] flex items-center border-b-2 border-[#e4e4e4]">
        <div className="relative w-[50px] h-[56px] ml-[4px] shrink-0">
          <svg width="44" height="56" viewBox="0 0 44 56" fill="none" className="absolute right-0 top-0">
            <path d="M1 1h28l14 14v40H1z" fill="#fafafa" stroke="#bdbdbd" strokeWidth="1.6" />
            <path d="M29 1v14h14" stroke="#bdbdbd" strokeWidth="1.6" />
            <circle cx="29" cy="28" r="9" fill="#e87d5e" />
            <path d="M29 19a9 9 0 0 1 9 9h-9z" fill="#f7c4b3" />
          </svg>
          <div className="absolute left-0 top-[14px] w-[27px] h-[27px] bg-[#b7472a] rounded-[2px] text-white text-[20px] font-semibold flex items-center justify-center">P</div>
        </div>
        <span className="ml-[38px] text-[25px] font-medium text-[#333] whitespace-nowrap">business_strategy.pptx</span>
        <span className="ml-auto text-[24px] text-[#999]">93 KB</span>
        <Chev w={17} h={12} sw={0.9} className="ml-[29px] mr-[1px]" />
      </div>
    </div>
  </div>
);

const StatusBar = () => (
  <div className="h-[43px] shrink-0 bg-[#f3f3f3] flex items-center pl-[13px] pr-[13px] text-[20px] text-[#444] whitespace-nowrap">
    <span className="pt-[4px]">Items: 665</span>
    <span className="ml-auto pt-[4px]">All folders are up to date.</span>
    <span className="ml-[35px] pt-[4px]">Connected to: Microsoft Exchange</span>
    <div className="ml-[36px] w-[80px] h-full bg-[#e0e0e0] flex items-center justify-center">
      <Svg w={28} h={26} sw={2}>
        <path d="M1 1h26v24H1zM1 7h26M8 7v18M20 7v18" />
      </Svg>
    </div>
    <div className="w-[78px] flex items-center justify-center">
      <Svg w={28} h={26} sw={1.6}>
        <path d="M14 3C10 1 5 1 2 2v20c3-1 8-1 12 1 4-2 9-2 12-1V2c-3-1-8-1-12 1zM14 3v20M6 7h4M6 11h4M6 15h4M18 7h4M18 11h4M18 15h4" />
      </Svg>
    </div>
    <div className="ml-[13px] w-[15px] h-[2px] bg-[#666]" />
    <div className="relative ml-[11px] w-[198px] h-[3px] bg-[#666]">
      <div className="absolute left-[94px] -top-[10px] w-[10px] h-[22px] bg-[#666]" />
    </div>
    <Svg w={16} h={16} stroke="#555" sw={1.4} className="ml-[11px]">
      <path d="M8 0v16M0 8h16" />
    </Svg>
    <span className="ml-[24px] pt-[4px]">100%</span>
  </div>
);

export default function App() {
  return (
    <div className="w-[3356px] h-[2016px] overflow-hidden flex flex-col bg-[#f0f0f0] font-['Open_Sans',sans-serif] text-[#333]">
      {/* title bar */}
      <div className="h-[90px] shrink-0 flex relative">
        <div className="relative ml-[30px] mt-[28px] w-[33px] h-[32px] shrink-0">
          <div className="absolute right-0 top-0 w-[26px] h-[32px] bg-[#28a8ea] rounded-[2px]" />
          <div className="absolute right-0 bottom-0 w-[26px] h-[14px] bg-[#50b0e8]" />
          <div className="absolute left-0 top-[8px] w-[19px] h-[18px] bg-[#0f5fb5] rounded-[2px] text-white text-[15px] font-bold leading-[18px] text-center">O</div>
        </div>
        <div className="ml-[505px] mt-[10px] w-[667px] h-[68px] bg-[#fafafa] border-2 border-[#dcdcdc] rounded-[8px] flex items-center pl-[37px] text-[24px] text-[#666]">
          <Svg w={30} h={30} stroke="#555" sw={1.6}>
            <circle cx="18" cy="11" r="9.5" />
            <path d="M13 20L2 29" />
          </Svg>
          <span className="ml-[26px]">Search</span>
        </div>
        <div className="ml-auto flex items-start pt-[34px] pr-[36px]">
          <div className="w-[20px] h-[2px] mt-[8px] bg-[#333]" />
          <Svg w={20} h={22} sw={1.8} className="ml-[75px]">
            <path d="M1 5h14v16H1zM6 5V1h13v15h-4" />
          </Svg>
          <Svg w={20} h={20} sw={1.8} className="ml-[76px]">
            <path d="M1 1l18 18M19 1L1 19" />
          </Svg>
        </div>
      </div>

      <div className="flex-1 flex min-h-0">
        <Rail />
        <div className="flex-1 flex flex-col min-w-0">
          {/* ribbon tabs */}
          <div className="h-[62px] pt-[2px] shrink-0 flex items-center text-[26px] text-[#444] relative">
            <span className="ml-[18px]">File</span>
            <span className="relative ml-[50px] font-semibold text-[#222]">
              Home
              <span className="absolute left-0 right-0 -bottom-[8px] h-[4px] rounded-full bg-[#2b6cc0]" />
            </span>
            <span className="ml-[36px]">Send / Receive</span>
            <span className="ml-[38px]">Folder</span>
            <span className="ml-[35px]">View</span>
            <span className="ml-[36px]">Help</span>
            <div className="ml-auto flex items-center mb-[2px] pr-[20px]">
              <div className="h-[47px] w-[218px] bg-white border-2 border-[#d6d6d6] rounded-[7px] flex items-center pl-[10px] gap-[8px] whitespace-nowrap">
                <Svg w={30} h={32} sw={1.8} className="-mt-[2px]">
                  <path d="M12 6L2 26l6 5 12-21zM6 21c3 0 4 2 3 6" />
                  <path d="M22 2l-1 5M27 6l-3 2" stroke="#3b8fd1" />
                </Svg>
                Coming Soon
              </div>
              <span className="ml-[13px] text-[25px] whitespace-nowrap">Try it now</span>
              <div className="ml-[12px] w-[84px] h-[40px] rounded-full bg-[#2b72c9] flex items-center justify-between pl-[12px] pr-[5px] text-white text-[20px]">
                On
                <div className="w-[29px] h-[29px] rounded-full bg-white" />
              </div>
            </div>
          </div>
          <Ribbon />
          {/* panes */}
          <div className="mt-[12px] flex-1 flex min-h-0">
            <FolderPane />
            <MessageList />
            <ReadingPane />
            <AttachmentsPane />
          </div>
          <div className="h-[3px] shrink-0" />
        </div>
      </div>
      <StatusBar />
    </div>
  );
}
